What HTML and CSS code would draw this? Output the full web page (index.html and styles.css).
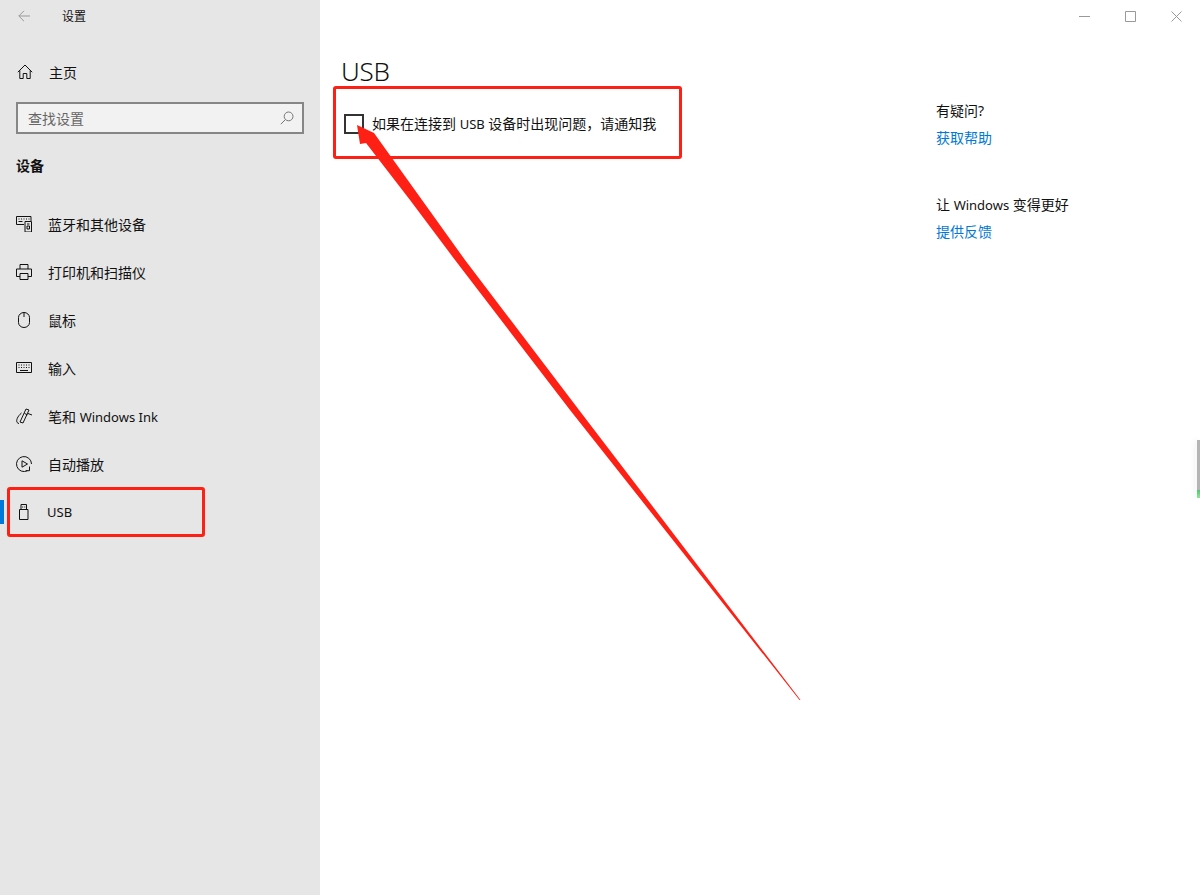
FILE: index.html
```html
<!DOCTYPE html>
<html lang="zh-CN">
<head>
<meta charset="utf-8">
<title>设置</title>
<link rel="stylesheet" href="styles.css">
</head>
<body>
<div class="app">
  <aside class="sidebar">
    <div class="titlebar">
      <svg class="back" width="12" height="12" viewBox="0 0 12 12"><path d="M12 6H.8M6 .8.8 6 6 11.200"/></svg>
      <span class="apptitle">设置</span>
    </div>
    <div class="home">
      <svg class="ico" width="16" height="16" viewBox="0 0 16 16"><path d="M.8 8.2 8 1l7.2 7.2M2.8 6.4V14.500H6.200V9.500H9.800V14.500H13.200V6.400"/></svg>
      <span>主页</span>
    </div>
    <div class="search">
      <span class="placeholder">查找设置</span>
      <svg class="searchico" width="14" height="14" viewBox="0 0 14 14"><circle cx="8.6" cy="5.4" r="4.4"/><path d="M5.4 8.6.8 13.2"/></svg>
    </div>
    <div class="section">设备</div>
    <nav class="nav">
      <div class="item">
        <svg class="ico" width="16" height="16" viewBox="0 0 16 16"><path d="M.5.5H15V5M.5.5V8.5H8M9 5.500H15.500V16H9ZM2.500 3h1M5 3h1M7.500 3h1M10 3h1M12.500 3h1M2.500 5.500h4M11 8h2.500M11 10h2.500v3H11Z"/></svg>
        <span>蓝牙和其他设备</span>
      </div>
      <div class="item">
        <svg class="ico" width="16" height="16" viewBox="0 0 16 16"><path d="M4 5V.5H12V5M4 12.500H.5V5H15.500V12.500H12M4 9.500H12V15.500H4Z"/></svg>
        <span>打印机和扫描仪</span>
      </div>
      <div class="item">
        <svg class="ico" width="16" height="16" viewBox="0 0 16 16"><path d="M2.500 5.500a5.500 5 0 0 1 11 0v5a5.500 5 0 0 1-11 0ZM8 .5V5"/></svg>
        <span>鼠标</span>
      </div>
      <div class="item">
        <svg class="ico" width="16" height="16" viewBox="0 0 16 16"><path d="M.5 2.500H15.500V12.500H.5ZM2.500 5h1M5 5h1M7.500 5h1M10 5h1M12.500 5h1M2.500 7.500h1M5 7.500h1M7.500 7.500h1M10 7.500h1M12.500 7.500h1M4 10.500h8"/></svg>
        <span>输入</span>
      </div>
      <div class="item">
        <svg class="ico" width="16" height="16" viewBox="0 0 16 16"><path d="M10 1 13 2 7 15 4 14ZM5.500 5C.5 9-1 15 3 15.500M12 5.500l4 1.500M8.500 5.500l3 1.300"/></svg>
        <span>笔和 <span class="en">Windows Ink</span></span>
      </div>
      <div class="item">
        <svg class="ico" width="16" height="16" viewBox="0 0 16 16"><path d="M11.500 14.700A7.500 7.500 0 1 1 15.500 8M6 4.800v6.400l5.500-3.200ZM13.500 10.500v4.200h-3.700"/></svg>
        <span>自动播放</span>
      </div>
      <div class="item active">
        <svg class="ico" width="16" height="16" viewBox="0 0 16 16"><path d="M3.500 5.500H12V15.500H3.500ZM5 5.500V.5H10.500V5.500M6.700 2.500v1M8.800 2.500v1"/></svg>
        <span class="en usb">USB</span>
      </div>
    </nav>
  </aside>
  <main class="content">
    <div class="winctrl">
      <svg class="wbtn" width="11" height="11" viewBox="0 0 11 11"><path d="M0 5.500H11"/></svg>
      <svg class="wbtn" width="11" height="11" viewBox="0 0 11 11"><path d="M.5.500H10.500V10.500H.5Z"/></svg>
      <svg class="wbtn" width="11" height="11" viewBox="0 0 11 11"><path d="M.5.500 10.500 10.500M10.500.500 .5 10.500"/></svg>
    </div>
    <div class="columns">
      <section class="main">
        <h1>USB</h1>
        <label class="check">
          <span class="box"></span>
          <span class="checktext">如果在连接到 <span class="en">USB</span> 设备时出现问题，请通知我</span>
        </label>
      </section>
      <aside class="help">
        <div class="block">
          <div class="q">有疑问?</div>
          <a class="link">获取帮助</a>
        </div>
        <div class="block">
          <div class="q">让 <span class="en">Windows</span> 变得更好</div>
          <a class="link">提供反馈</a>
        </div>
      </aside>
    </div>
  </main>
</div>
<div class="edge"></div>
<div class="mark mark-usb"></div>
<div class="mark mark-check"></div>
<svg class="arrow" width="1200" height="895" viewBox="0 0 1200 895"><polygon points="357,125 374,133 422,200 465,260 579,410 800.500,700 799.500,700 570,410 455,260 410,200 366,143 360,144"/></svg>
</body>
</html>
```
FILE: styles.css
```css
* { box-sizing: border-box; }
html, body { margin: 0; padding: 0; background: #fff; }
body {
  width: 1200px;
  height: 895px;
  overflow: hidden;
  position: relative;
  font-family: "Noto Sans", "Noto Sans CJK SC", sans-serif;
  font-size: 14px;
  color: #111;
}
.en { font-size: 13px; }
.usb { margin-left: -1px; }
.app { display: flex; height: 895px; }
.sidebar { width: 320px; flex: none; background: #e6e6e6; display: flex; flex-direction: column; }
svg path, svg circle { fill: none; stroke-width: 1; }
.ico path { stroke: #111; }
.titlebar { height: 32px; display: flex; align-items: center; padding-left: 18px; }
.back path { stroke: #999; }
.apptitle { margin-left: 32px; font-size: 12px; }
.home { height: 24px; margin-top: 28px; display: flex; align-items: center; padding-left: 17px; gap: 16px; }
.search {
  margin: 18px 0 0 16px;
  width: 288px;
  height: 32px;
  border: 2px solid #868686;
  background: #f2f2f2;
  display: flex;
  align-items: center;
  justify-content: space-between;
  padding: 0 8px 0 10px;
}
.placeholder { color: #666; }
.searchico circle, .searchico path { stroke: #777; }
.section { margin: 20px 0 0 16px; height: 24px; line-height: 24px; font-weight: 700; }
.nav { margin-top: 22px; display: flex; flex-direction: column; }
.item { height: 48px; display: flex; align-items: center; padding-left: 16px; gap: 16px; position: relative; }
.item.active::before { content: ""; position: absolute; left: 0; top: 12px; width: 4px; height: 24px; background: #0078d7; }
.content { flex: 1; display: flex; flex-direction: column; min-width: 0; }
.winctrl { height: 32px; display: flex; justify-content: flex-end; gap: 35px; padding: 11px 18px 0 0; }
.wbtn path { stroke: #999; }
.columns { display: flex; justify-content: space-between; }
.main { padding-left: 21px; }
h1 { margin: 21px 0 0; font-size: 26px; line-height: 36px; font-weight: 300; letter-spacing: -.2px; }
.check { display: flex; align-items: center; gap: 8px; margin: 24px 0 0 3px; }
.checktext { margin-bottom: 2px; }
.box { width: 20px; height: 20px; border: 2px solid #333; }
.help { width: 264px; padding-top: 68px; display: flex; flex-direction: column; gap: 45px; }
.q { height: 22px; line-height: 22px; }
.link { display: block; margin-top: 5px; height: 22px; line-height: 22px; color: #0078d7; }
.edge {
  position: absolute;
  right: 0; top: 440px;
  width: 3px; height: 58px;
  background: linear-gradient(#b4b4b4 0 86%, #4ec46e 86%, #8ee89a 100%);
  box-shadow: -2px 0 6px rgba(0,0,0,.08);
}
.mark { position: absolute; border: 3px solid #fe2015; border-radius: 3px; }
.mark-usb { left: 7px; top: 487px; width: 198px; height: 50px; }
.mark-check { left: 333px; top: 86px; width: 349px; height: 73px; }
.arrow { position: absolute; left: 0; top: 0; }
.arrow polygon { fill: #fe2015; }
```
